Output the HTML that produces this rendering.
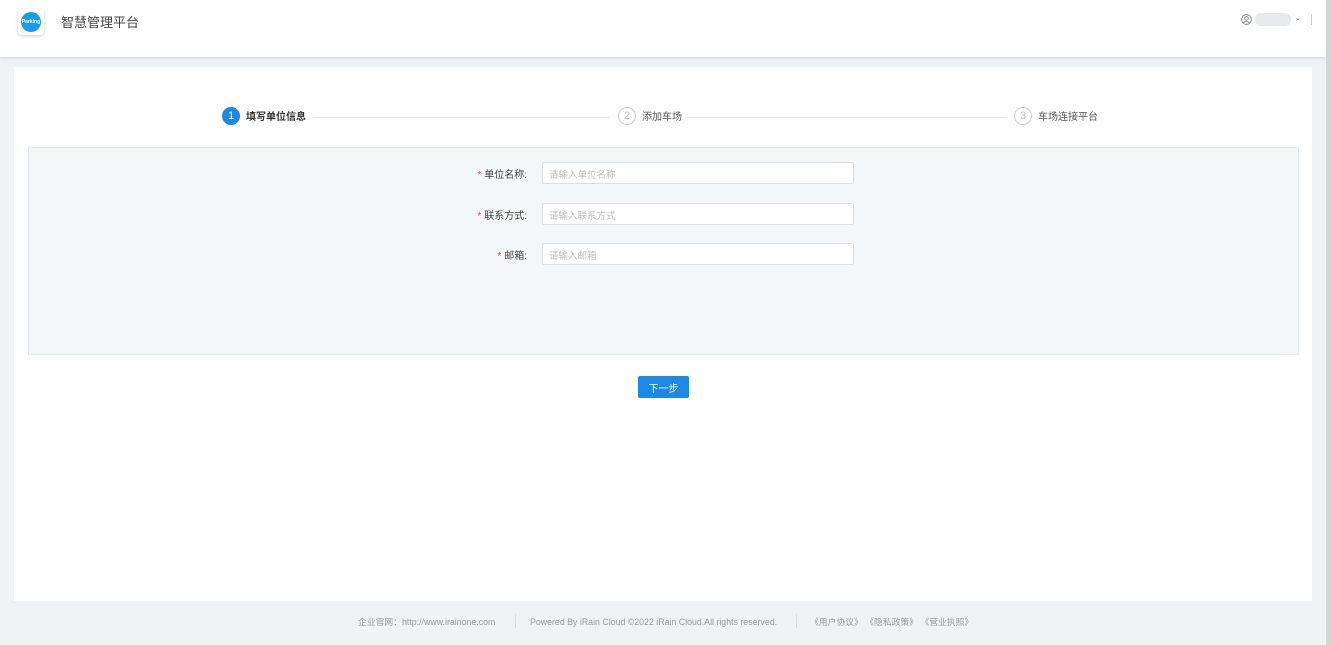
<!DOCTYPE html>
<html><head><meta charset="utf-8"><style>
*{margin:0;padding:0;box-sizing:border-box}
body{width:1332px;height:645px;background:#f0f2f5;font-family:"Liberation Sans","Noto Sans CJK SC",sans-serif;position:relative;overflow:hidden}
.hdr{position:absolute;left:0;top:0;width:1326px;height:57px;background:#fff;box-shadow:0 1px 4px rgba(0,0,0,.12)}
.logo{position:absolute;left:18px;top:9px;width:26px;height:26px;border-radius:4px;background:#fff;box-shadow:0 1px 3px rgba(0,0,0,.2)}
.logo i{position:absolute;left:3px;top:3px;width:20px;height:20px;border-radius:50%;background:#1a9be6;color:#fff;font-size:5px;font-style:normal;font-weight:bold;text-align:center;line-height:20px}
.title{position:absolute;left:61px;top:12px;font-size:13px;color:#444}
.sb{position:absolute;right:0;top:0;width:6px;height:645px;background:#d6d6d6}
.card{position:absolute;left:14px;top:67px;width:1298px;height:534px;background:#fff}
.step{position:absolute;top:107px;font-size:10px;color:#555;display:flex;align-items:center}
.step span{position:relative;top:-1px}
.c{width:18px;height:18px;border-radius:50%;border:1px solid #ccc;color:#bbb;font-size:11px;text-align:center;line-height:16px;margin-right:6px}
.line{position:absolute;top:117px;height:1px;background:#e4e4e4}
.panel{position:absolute;left:28px;top:147px;width:1271px;height:208px;background:#f4f7fa;border:1px solid #e3e7ec}
.row{position:absolute;left:0;width:100%}
.lab{position:absolute;right:771px;top:4px;font-size:10px;color:#444;white-space:nowrap}
.lab b{color:#e5484d;font-weight:normal;margin-right:3px}
.inp{position:absolute;left:513px;top:0;width:312px;height:22px;background:#fff;border:1px solid #dcdfe6;border-radius:2px;font-size:9.5px;color:#bbb;padding:4px 6px}
.btn{position:absolute;left:638px;top:376px;width:51px;height:22px;background:#1e88e5;border-radius:2px;color:#fff;font-size:10px;display:flex;align-items:center;justify-content:center}
.ft{position:absolute;top:615px;font-size:8.8px;color:#999;white-space:nowrap}
.ft.l{top:617px}
.sep{position:absolute;top:614px;width:1px;height:14px;background:#ddd}
</style></head><body>
<div class="hdr">
<div class="logo"><i>Parking</i></div>
<div class="title">智慧管理平台</div>
<svg style="position:absolute;left:1241px;top:14px" width="11" height="11" viewBox="0 0 12 12"><circle cx="6" cy="6" r="5.3" fill="none" stroke="#888" stroke-width="1"/><circle cx="6" cy="4.8" r="2" fill="none" stroke="#888"/><path d="M2.5 9.8c1-1.8 6-1.8 7 0" fill="none" stroke="#888"/></svg>
<div style="position:absolute;left:1255px;top:13px;width:36px;height:13px;background:#e6e8ec;border-radius:6px"></div>
<div style="position:absolute;left:1295px;top:14px;font-size:7px;color:#666">⌄</div>
<div style="position:absolute;left:1311px;top:14px;width:1px;height:11px;background:#ccc"></div>
</div>
<div class="sb"></div>
<div class="card"></div>
<div class="step" style="left:222px"><div class="c" style="background:#1e88e5;border-color:#1e88e5;color:#fff">1</div><span style="color:#333;font-weight:bold">填写单位信息</span></div>
<div class="line" style="left:313px;width:297px"></div>
<div class="step" style="left:618px"><div class="c">2</div><span>添加车场</span></div>
<div class="line" style="left:687px;width:320px"></div>
<div class="step" style="left:1014px"><div class="c">3</div><span>车场连接平台</span></div>
<div class="panel">
<div class="row" style="top:14px"><div class="lab"><b>*</b>单位名称:</div><div class="inp">请输入单位名称</div></div>
<div class="row" style="top:55px"><div class="lab"><b>*</b>联系方式:</div><div class="inp">请输入联系方式</div></div>
<div class="row" style="top:95px"><div class="lab"><b>*</b>邮箱:</div><div class="inp">请输入邮箱</div></div>
</div>
<div class="btn">下一步</div>
<div class="ft" style="left:358px">企业官网：http://www.irainone.com</div>
<div class="sep" style="left:515px"></div>
<div class="ft l" style="left:530px">Powered By iRain Cloud ©2022 iRain Cloud.All rights reserved.</div>
<div class="sep" style="left:796px"></div>
<div class="ft" style="left:810px">《用户协议》 《隐私政策》 《营业执照》</div>
</body></html>
